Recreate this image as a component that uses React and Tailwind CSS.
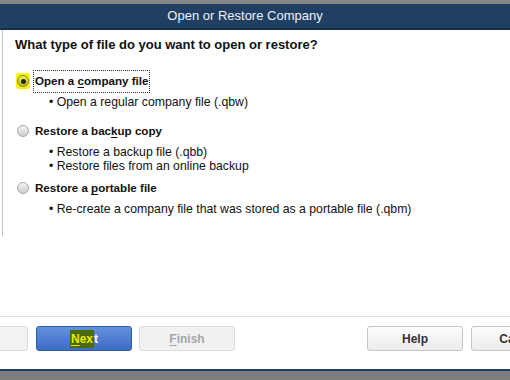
import React, { useState } from 'react';

const options = [
    { id: 'open', pre: 'Open a ', key: 'c', post: 'ompany file', bullets: ['Open a regular company file (.qbw)'] },
    { id: 'backup', pre: 'Restore a bac', key: 'k', post: 'up copy', bullets: ['Restore a backup file (.qbb)', 'Restore files from an online backup'] },
    { id: 'portable', pre: 'Restore a ', key: 'p', post: 'ortable file', bullets: ['Re-create a company file that was stored as a portable file (.qbm)'] },
];

const Radio = ({ checked, highlight }) => (
    <span className="relative w-[14px] h-[16px] flex items-center justify-center shrink-0">
        {highlight && <span className="absolute inset-0 bg-[#f4f400] rounded-[3px]" />}
        <span
            className={
                'relative w-[12px] h-[12px] rounded-full border flex items-center justify-center ' +
                (highlight
                    ? 'border-[#8a8a10] bg-gradient-to-b from-[#f0f060] to-[#b8b820]'
                    : 'border-[#a8a8a8] bg-gradient-to-b from-[#f4f4f4] to-[#cdcdcd]')
            }
        >
            {checked && <span className="w-[5px] h-[5px] rounded-full bg-[#2a2a10]" />}
        </span>
    </span>
);

const App = () => {
    const [selected, setSelected] = useState('open');
    const rowMargins = ['mt-[17px]', 'mt-[11px]', 'mt-[4px]'];

    return (
        <div className="w-[510px] h-[380px] overflow-hidden bg-white flex flex-col font-['Liberation_Sans',Arial,sans-serif] text-[#111]">
            <div className="h-[4px] bg-[#858585]" />
            <div className="h-[26px] bg-[#213f63] border-b-2 border-[#172f4d] flex items-center justify-center pr-[20px] text-[13px] text-[#eef2f7]">
                Open or Restore Company
            </div>

            <div className="h-[206px] ml-[2px] border-l border-[#c4c4c4] pl-[12px]">
                <h1 className="mt-[7px] text-[13px] leading-[16px] font-bold">
                    What type of file do you want to open or restore?
                </h1>

                {options.map((opt, i) => (
                    <div key={opt.id} className={rowMargins[i]}>
                        <div
                            className="h-[22px] flex items-center cursor-default"
                            onClick={() => setSelected(opt.id)}
                        >
                            <span className="ml-[1px]">
                                <Radio checked={selected === opt.id} highlight={i === 0} />
                            </span>
                            <span
                                className={
                                    'ml-[3px] h-[23px] px-[1px] flex items-center text-[11.6px] font-bold border ' +
                                    (selected === opt.id ? 'border-dotted border-[#333]' : 'border-transparent')
                                }
                            >
                                <span className="whitespace-pre">
                                    {opt.pre}
                                    <span className="underline underline-offset-2">{opt.key}</span>
                                    {opt.post}
                                </span>
                            </span>
                        </div>
                        <ul className="mt-[3px] pl-[34px] text-[12.25px] leading-[14px]">
                            {opt.bullets.map((b) => (
                                <li key={b}>• {b}</li>
                            ))}
                        </ul>
                    </div>
                ))}
            </div>

            <div className="h-[80px]" />
            <div className="h-px bg-[#e2e2e2]" />

            <div className="h-[52px] pt-[9px] flex items-start text-[12px] font-bold">
                <button className="shrink-0 w-[96px] h-[25px] -ml-[68px] rounded-[3px] border border-[#dadada] bg-[#f2f2f2]" />
                <button className="shrink-0 ml-[8px] w-[96px] h-[25px] rounded-[3px] border border-[#2d5aa8] bg-gradient-to-b from-[#6392dc] to-[#3d6cc4] text-white flex items-center justify-center">
                    <span className="bg-[#4d6a0a] text-[#e8ec00] px-[1px]">
                        <span className="underline underline-offset-2">N</span>ex
                    </span>
                    <span>t</span>
                </button>
                <button className="shrink-0 ml-[7px] w-[96px] h-[25px] rounded-[3px] border border-[#dcdcdc] bg-[#f1f1f1] text-[#a6a6a6]">
                    <span className="underline underline-offset-2">F</span>inish
                </button>
                <button className="shrink-0 ml-[132px] w-[96px] h-[25px] rounded-[3px] border border-[#c6c6c6] bg-gradient-to-b from-[#fdfdfd] to-[#ececec] text-[#333]">
                    Help
                </button>
                <button className="shrink-0 ml-[8px] w-[96px] h-[25px] rounded-[3px] border border-[#c6c6c6] bg-gradient-to-b from-[#fdfdfd] to-[#ececec] text-[#333]">
                    Cancel
                </button>
            </div>

            <div className="h-[2px] bg-[#213f63]" />
            <div className="flex-1 bg-[#7d7d7d]" />
        </div>
    );
};

export default App;
